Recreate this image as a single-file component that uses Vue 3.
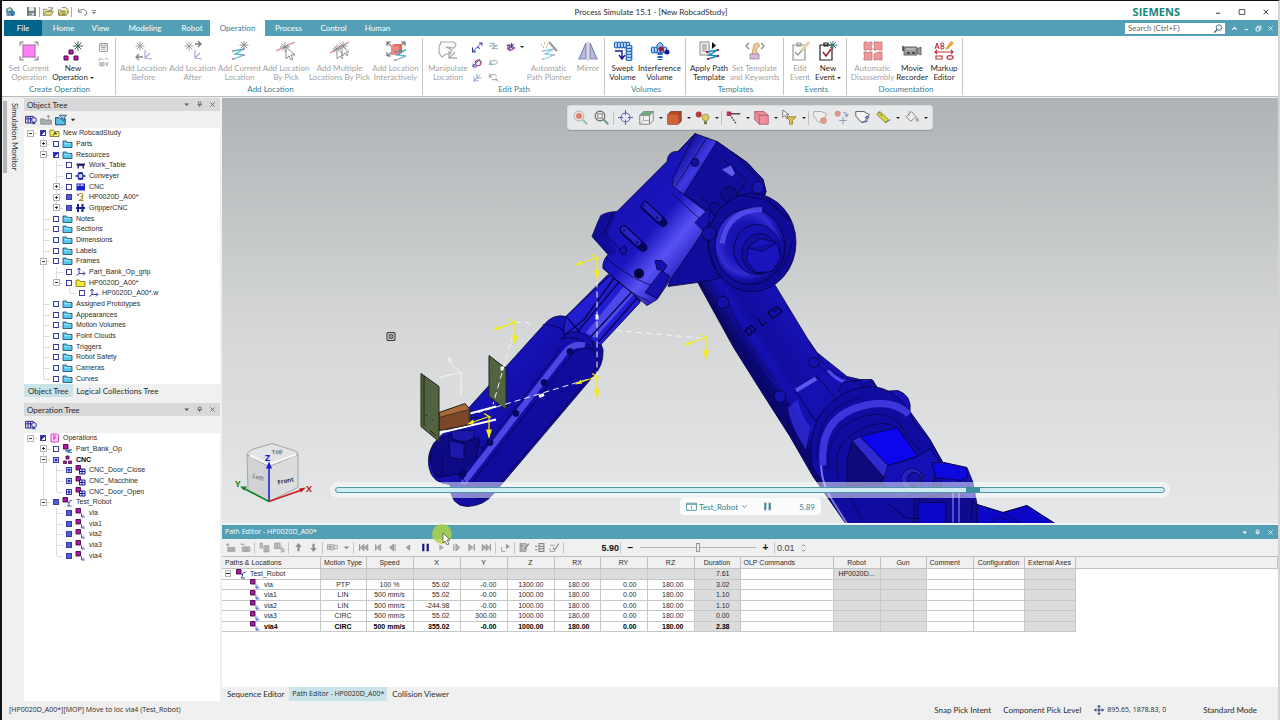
<script setup>
import { computed, ref } from 'vue'

const star = (x, y, r, c) => {
  const d = Math.round(r * 7) / 10
  return `<path d="M${x - r} ${y}h${2 * r}M${x} ${y - r}v${2 * r}M${x - d} ${y - d}l${2 * d} ${2 * d}M${x - d} ${y + d}l${2 * d} ${-2 * d}" stroke="${c}" stroke-width=".9" fill="none"/>`
}
const zig = (x, y, o = 1) =>
  `<g opacity="${o}"><path d="M${x} ${y + 2}l11-2-9 5 9 1-10 4" stroke="#2c9ac0" stroke-width="1.3" fill="none"/><path d="M${x - 1} ${y + 1}h2v2h-2zM${x + 10} ${y - 1}h2v2h-2zM${x + 10} ${y + 5}h2v2h-2zM${x - 1} ${y + 9}h2v2h-2z" fill="#d4607c"/></g>`
const coil = (x, y, n, v) => {
  let s = ''
  for (let i = 0; i < n; i++) {
    s += `<ellipse cx="${v ? x : x + i * 3}" cy="${v ? y + i * 3 : y}" rx="${v ? 3 : 1.7}" ry="${v ? 1.7 : 3}" fill="#b9dcf5" stroke="#1b60bd" stroke-width="1.1"/>`
  }
  return s
}

const icons = {
  app: '<path d="M2 5l7-3 5 3v7l-6 5-6-4z" fill="#4c8db1"/><path d="M4 6l5-2 3 3-5 3z" fill="#d6e38d"/><circle cx="13" cy="13" r="5" fill="#2d6aa5"/><path d="M3 14h7v4H3zM12 10l5 5" fill="#596f7c" stroke="#b8dcf0"/>',
  save: '<path d="M2 2h14l2 2v14H2z" fill="#687374"/><path d="M5 2h10v7H5z" fill="#e5ebea"/><path d="M6 12h9v6H6z" fill="#c2cccc"/><path d="M8 13h2v4H8z" fill="#4e5758"/>',
  open: '<path d="M1 17V6h6l2 2h7v3" fill="#e9e7ac" stroke="#858449" stroke-width="1.4"/><path d="M1 17l4-7h14l-4 7z" fill="#d9d67a" stroke="#858449" stroke-width="1.4"/><path d="M9 4c3-3 6-2 8 1M17 2v4h-4" fill="none" stroke="#667" stroke-width="1.3"/>',
  open2: '<path d="M1 16V7h5l2 2h7v2" fill="#eceaae" stroke="#7b7a3c" stroke-width="1.5"/><path d="M1 17l4-7h14l-4 7z" fill="#d9d568" stroke="#7b7a3c" stroke-width="1.5"/><path d="M7 3l6-1 5 4v7" fill="#f0eeb5" stroke="#7b7a3c" stroke-width="1.5"/><path d="M7 13h6v3H7z" fill="#86862f"/>',
  undo: '<path d="M3 5v6h6M3 11c4-7 13-6 15 2-1 3-3 4-5 4" fill="none" stroke="#707577" stroke-width="1.7"/>',
  qat: '<path d="M5 5h10v2H5zM5 10h10l-5 5z" fill="#666"/>',
  setcur: '<path d="M1 5V1h4M15 1h4v4M19 15v4h-4M5 19H1v-4M1 1l4 4M19 1l-4 4M1 19l4-4M19 19l-4-4" stroke="#777" fill="none" stroke-width=".9"/><rect x="4" y="4" width="12" height="12" fill="#ff80f4" stroke="#a867a8"/>',
  newop: `<g fill="#c318c0" stroke="#4a0a4c"><path d="M6 9h4v4H6zM1 15h4v4H1zM11 15h4v4h-4z"/></g>${star(15, 5, 5, '#274e4e')}`,
  before: `${star(6, 5, 4.5, '#999')}<path d="M2 16h7M5 13l-3 3 3 3" fill="none" stroke="#888" stroke-width="1.3"/><path d="M11 9v8l7 1M11 17l5-5" fill="none" stroke="#aaa4e6" stroke-width="1.2"/>`,
  after: `${star(6, 5, 4.5, '#999')}<path d="M12 3h6M15 0l3 3-3 3" fill="none" stroke="#777" stroke-width="1.3"/><path d="M12 9v8l7 1M12 17l5-5" fill="none" stroke="#aaa4e6" stroke-width="1.2"/>`,
  current: `${zig(3, 8, 0.75)}${star(14, 4, 4.5, '#888')}`,
  pick: `<path d="M0 10L19 1" stroke="#d78a9a" stroke-width="1.3"/>${star(9, 6, 5, '#888')}<path d="M10 6v12l3-3 2 4 2-1-2-4h4z" fill="#fff" stroke="#888"/>`,
  multi: `<path d="M0 12L19 1" stroke="#d78a9a" stroke-width="1.3"/>${star(7, 8, 4.5, '#888')}${star(13, 5, 4.5, '#888')}<path d="M7 8v10l3-3 2 3 1-1-2-3h3zM12 5v10l3-3 2 3 1-1-2-3h3z" fill="#fff" stroke="#999"/>`,
  inter: '<path d="M1 5V1h4M1 1l5 5M15 1h4v4M19 1l-5 4M1 15v-4M1 15h4M1 15l5-4" stroke="#777" fill="none" stroke-width="1.2"/><path d="M5 5l3-2h8v8l-3 3H5z" fill="#e06a60"/><path d="M5 5h8v9H5z" fill="#ee8a80"/>' + zig(9, 9, 0.7),
  manip: '<path d="M1 6l2-5h13l2 3-2 3-8-1 6 3-2 4H8L4 16 1 12z" fill="#fafafa" stroke="#aaa" stroke-width="1.2"/><path d="M11 10v7h8M11 17l6-6" fill="none" stroke="#aaa" stroke-width="1.3"/>',
  auto: `${zig(4, 8, 0.5)}<path d="M10 1l8 9" stroke="#999" stroke-width="2"/><path d="M2 4h1M5 2h1M4 6h1M8 3h1M7 6h1" stroke="#c5a55f" stroke-width="1.4"/>`,
  mirror: '<path d="M8 2v16H1zM12 2v16h7z" fill="#b5b8e1" stroke="#8589ba" stroke-width="1.2"/><path d="M10 0v20" stroke="#999" stroke-width=".7"/>',
  swept: `${coil(3, 4, 5, false)}${coil(16, 6, 5, true)}<path d="M2 10h7v7M6 14l3 4 3-4" fill="none" stroke="#1a1694" stroke-width="1.4"/>`,
  interf: `${coil(3, 9, 5, false)}<path d="M10 1l3 3v4H7V4z" fill="#89c5f0" stroke="#2064be"/><path d="M10 12v7" stroke="#2064be" stroke-width="5" stroke-dasharray="2 1"/><circle cx="11" cy="8" r="2.500" fill="#a61640"/><circle cx="17" cy="11" r="2.500" fill="#1a1694"/>`,
  apply: '<path d="M1 1h9v13H1z" fill="#f2f2f2" stroke="#888"/><path d="M3 4h5M3 6h5M3 8h5M3 10h4" stroke="#888"/><path d="M13 1l4 3.500-4 3.500z" fill="#111"/><path d="M8 11l11-2-9 5 9 1-10 3" stroke="#1a8ac0" stroke-width="1.4" fill="none"/><path d="M7 10h2v2H7zM18 8h2v2h-2zM18 14h2v2h-2zM8 17h2v2H8z" fill="#b81638"/>',
  settpl: '<path d="M4 2L1 5l3 3M16 2l3 3-3 3" fill="none" stroke="#888" stroke-width="1.3"/><path d="M7 13l1-5 1-5 4-1 2 3-2 1-2 3 2 4z" fill="#ebcb9d" stroke="#cda768"/><path d="M5 13h9v5H5z" fill="#d9b5df" stroke="#b08db8"/>',
  editev: '<path d="M3 4h12v15H3zM7 2h4v3H7z" fill="#fafafa" stroke="#999" stroke-width="1.2"/><path d="M5 11l3 3 5-6" fill="none" stroke="#999" stroke-width="1.3"/><path d="M11 8l7-8 2 2-7 8z" fill="#e8cda7"/>',
  newev: `<path d="M2 4h12v15H2zM6 2h4v3H6z" fill="#fff" stroke="#222" stroke-width="1.2"/><path d="M5 11l3 4 5-7" fill="none" stroke="#9c1730" stroke-width="1.4"/>${star(15, 4, 4.5, '#26736b')}`,
  disas: '<g fill="#f29596" stroke="#b67a7a" stroke-width=".8"><path d="M1 1h3q1 2 3 0h2v3q-2 1 0 3v2H6q-1-2-2 0H1zM11 1h8v8h-3q-1-2-2 0h-3V7q2-1 0-2zM1 11h3q1 2 2 0h3v8H1v-3q2-1 0-2zM11 13l4-2h4v8h-3q-1-2-2 0h-3z"/></g>',
  movie: '<path d="M2 6h13v8H2zM15 8l4-2v8l-4-2z" fill="#9a9d9c" stroke="#666"/><path d="M1 5v5M5 12h3M10 12h3" stroke="#333" stroke-width="1.4"/><path d="M4 8h9" stroke="#ccc"/>',
  markup: '<path d="M1 8l2-6 2 6M2 6h2M7 8V2h2q2 1 0 3H7h2q2 2 0 3z" fill="none" stroke="#c2303a"/><path d="M12 7l5-7 3 2-6 6-3 1z" fill="#e8a43c"/><path d="M1 11h18M3 9l-2 2 2 2M17 9l2 2-2 2M2 15h6v3H2z" fill="none" stroke="#c2303a" stroke-width="1.2"/><ellipse cx="16" cy="16.500" rx="3" ry="1.800" fill="none" stroke="#c2303a" stroke-width="1.200"/>',
  list: '<path d="M3 3h14v14H3zM3 7h14M6 10h8M6 13h8M7 1v4M13 1v4" fill="none" stroke="#888" stroke-width="1.5"/>',
  replay: '<path d="M3 8q3-6 7 0M12 6q4-5 6 1M3 8l-1-4M3 12h3v6H3zM8 12h3v6H8zM14 11l2 7 2-7" fill="none" stroke="#999" stroke-width="1.5"/>',
  p1: '<path d="M3 16L15 4" stroke="#3c3cac" stroke-width="1.500"/><path d="M1 10v8h6M13 2h5v5M10 9l4 3" fill="none" stroke="#3434a0" stroke-width="2"/><circle cx="4" cy="16" r="2" fill="#4d9bc4"/>',
  p2: '<path d="M2 8l15-2-10 6h11M3 3h8M9 1l3 2-3 2" fill="none" stroke="#7a9cae" stroke-width="1.500"/>',
  p3: '<circle cx="10" cy="10" r="5" fill="none" stroke="#c23b67" stroke-width="2"/><path d="M3 6h6v10M12 2v9h7M4 13l12-9" fill="none" stroke="#3a35a8" stroke-width="1.800"/>',
  p4: '<path d="M2 17l12-13M2 12v6h7" fill="none" stroke="#3b37b0" stroke-width="1.800"/><circle cx="11" cy="11" r="5" fill="none" stroke="#b8358a" stroke-width="2"/><path d="M12 4l6 6" stroke="#48a068" stroke-width="2"/>',
  p5: '<path d="M2 14c3-9 15-10 15-4 0 4-6 4-11 2M4 5v9h5" fill="none" stroke="#879ba8" stroke-width="1.600"/>',
  p6: '<path d="M2 18l13-13M4 8v8h8M9 3v8h8" fill="none" stroke="#8491c8" stroke-width="1.500"/>',
  p7: '<path d="M2 9c4-6 11-6 14-1M4 3l-2 6h6M7 14h10M14 11l4 6" fill="none" stroke="#8b979c" stroke-width="1.600"/>',
  cols: '<path d="M1 4h13v11H1zM1 8h13M5 4v11M9 4v11" fill="none" stroke="#22228c" stroke-width="1.600"/><circle cx="15" cy="10" r="4" fill="#dce4ff" stroke="#22228c" stroke-width="1.500"/><path d="M13 14v4l2-2 2 2v-4" fill="#22228c"/>',
  importg: '<path d="M1 17V8h6l2 2h10v7zM14 9V3M11 5l3-3 3 3" fill="#a9abac" stroke="#8e9192" stroke-width="1.400"/>',
  filter: '<path d="M1 18V6h6l2 2h8v10z" fill="#58c3e8" stroke="#173a66" stroke-width="1.500"/><path d="M7 2h12l-4 5v5l-3-2V7z" fill="#91cff0" stroke="#173a66" stroke-width="1.200"/>',
  folder: '<path d="M1 17V4h7l2 3h9v10z" fill="#58c8ec" stroke="#185070" stroke-width="1.700"/><path d="M3 9h14" stroke="#a9e6f8" stroke-width="1.500"/>',
  folderY: '<path d="M1 17V4h7l2 3h9v10z" fill="#f0e83a" stroke="#77722a" stroke-width="1.700"/>',
  study: '<path d="M1 17V4h7l2 3h9v10z" fill="#f3ee66" stroke="#77722a" stroke-width="1.700"/><path d="M7 15l4-6 1 3 3-1M11 9v3" fill="none" stroke="#333" stroke-width="2"/>',
  tableI: '<path d="M2 7h17v4h-2v6h-3v-5H7v5H4v-6H2z" fill="#262478"/>',
  conv: '<path d="M0 10h20" stroke="#17177c" stroke-width="3"/><path d="M6 2h8l3 8-3 8H6l-3-8z" fill="#2c32a8"/><circle cx="10" cy="10" r="4" fill="#c8d8fa"/>',
  cnc: '<path d="M2 3h17v14H2z" fill="#1b22c8"/><path d="M4 6h4M10 6h6" stroke="#fff" stroke-width="2.500"/>',
  robot: '<path d="M7 4q7-3 8 2 0 3-5 3 5 1 4 4l-6 4h8" fill="none" stroke="#a58e23" stroke-width="2.200"/><path d="M3 3l3 4M4 8l2-4" stroke="#443" stroke-width="1.500"/>',
  grip: '<path d="M5 2v16M14 2v16M1 10h18" stroke="#191e9c" stroke-width="4"/>',
  frame: '<path d="M7 3v10h11M7 13l-5 4M15 9l4 4-4 4M4 6l3-4 3 4" fill="none" stroke="#2a2a9c" stroke-width="1.800"/>',
  ops: '<path d="M3 2h13l2 2v14H3z" fill="#ffd6fa" stroke="#c436b4" stroke-width="1.800"/><path d="M7 6h6M7 10h7M9 6v9" stroke="#c436b4" stroke-width="1.800"/>',
  partop: '<path d="M2 1h9v9H2z" fill="#b214aa" stroke="#43083f" stroke-width="1.800"/><path d="M5 14l13-3-8 5 9 1" fill="none" stroke="#236ec0" stroke-width="2.200"/>',
  cmp: '<g fill="#b214aa" stroke="#43083f" stroke-width="1.600"><path d="M7 2h6v6H7zM2 12h6v5H2zM12 12h6v5h-6z"/></g>',
  door: '<path d="M1 1h9v9H1z" fill="#b214aa" stroke="#43083f" stroke-width="1.800"/><path d="M8 8h11v10H8zM8 13h11M13 8v10" fill="#e8eeff" stroke="#16169c" stroke-width="2"/>',
  robop: '<path d="M1 1h9v9H1z" fill="#b214aa" stroke="#43083f" stroke-width="1.800"/><path d="M19 6l-6 3v6l-3 3h8M10 10l3 2" fill="none" stroke="#2c4cb8" stroke-width="2"/>',
  via: '<path d="M1 1h9v9H1z" fill="#b214aa" stroke="#43083f" stroke-width="1.800"/><path d="M12 10v8h7M12 18l5-5" fill="none" stroke="#2c3cc0" stroke-width="1.600"/>',
  zoomsel: '<circle cx="8" cy="8" r="6.500" fill="#f7e2de" stroke="#a9b2b5" stroke-width="1.300"/><circle cx="8" cy="8" r="4" fill="#d98272"/><path d="M13 13l6 6" stroke="#91c4ab" stroke-width="2.500"/>',
  zoomfit: '<circle cx="8" cy="8" r="6.500" fill="#eee" stroke="#666" stroke-width="1.500"/><path d="M5 5h6v6H5z" fill="none" stroke="#555"/><path d="M13 13l6 6" stroke="#6e9b88" stroke-width="2.500"/>',
  target: '<circle cx="10" cy="10" r="6" fill="#e9ebfa" stroke="#5b66a8" stroke-width="1.400"/><path d="M10 0v7M10 13v7M0 10h7M13 10h7" stroke="#5b66a8" stroke-width="1.400"/>',
  cubeG: '<path d="M1 7l5-5h13v12l-5 5H1z" fill="#eee" stroke="#666"/><path d="M1 7l5-5h13l-5 5z" fill="#6cb280"/><path d="M1 7h13v12M14 7l5-5" fill="none" stroke="#666"/><path d="M6 8v6h8M6 14l-5 5" stroke="#999" fill="none"/>',
  cubeR: '<path d="M1 6l4-4h14v13l-4 4H1z" fill="#b44a28" stroke="#6c3625"/><path d="M1 6h14v13H1z" fill="#cf6238"/><path d="M15 6l4-4" stroke="#6c3625"/>',
  bulb: '<circle cx="5" cy="6" r="4" fill="#b43c38"/><circle cx="14" cy="10" r="4.500" fill="#d8cf67" stroke="#928b3a"/><path d="M12 15h4v4h-4z" fill="#76754f"/>',
  chain: '<path d="M4 5h15" stroke="#4d5054" stroke-width="2"/><path d="M5 6l9 13" stroke="#444" stroke-width="1.800" stroke-dasharray="2.500 1.500"/><path d="M1 2h6v6H1z" fill="#ba2f4d"/>',
  cubeP: '<path d="M1 2h12l6 5v12H7l-6-6z" fill="#ee8e9c" stroke="#a85461"/><path d="M1 2l6 5h12M7 7v12" fill="none" stroke="#a85461"/>',
  filt2: '<path d="M5 9h14l-5 5v5h-4v-5z" fill="#d9bc48" stroke="#8d7a30"/><path d="M1 0v10l3-3 2 4 2-1-2-4h3z" fill="#fff" stroke="#555"/>',
  g1: '<path d="M1 2h10l7 3-2 5-5 6H7L1 8z" fill="#eee" stroke="#999"/><circle cx="14" cy="14" r="4.500" fill="#dd9a8d"/>',
  g2: '<circle cx="5" cy="5" r="4" fill="#dc9488"/><path d="M12 3q5 0 5 5M14 6l3 3 2-4M12 9v10M7 14h10" fill="none" stroke="#8e9ebb" stroke-width="1.400"/>',
  g3: '<path d="M1 2h11l7 4-2 4-5 6H8L1 8z" fill="#f4f4f4" stroke="#555" stroke-width="1.200"/><path d="M16 9v6l-7 2M13 11l3-3 3 3" fill="none" stroke="#5665a8" stroke-width="1.400"/>',
  ruler: '<path d="M1 6l4-4 12 11-4 4z" fill="#d6d643" stroke="#75752f"/><path d="M4 2v3M7 5v3M12 17l7-4" stroke="#555"/>',
  paint: '<path d="M3 9l7-7 6 7-7 6z" fill="#eee" stroke="#888" stroke-width="1.300"/><path d="M17 10q4 5 1 5t-1-5M7 0v8" fill="#aaa" stroke="#999"/>',
  addp: '<path d="M2 5h6M5 2v6" stroke="#999" stroke-width="2"/><path d="M5 10h13v7H5zM9 10v7M13 10v7" fill="#bbb" stroke="#999" stroke-width="1.500"/>',
  remp: '<path d="M1 4h7" stroke="#999" stroke-width="2"/><path d="M4 9h14v8H4zM9 9v8M13 9v8" fill="#bbb" stroke="#999" stroke-width="1.500"/>',
  cp1: '<path d="M2 2h4v9H2zM9 7h9v11H9zM12 7v11M15 7v11" fill="#ccc" stroke="#999" stroke-width="1.500"/>',
  cp2: '<path d="M1 2h10v10H1zM4 2v10M7 2v10M14 8v5h-3M14 13h4v5h-6" fill="#ccc" stroke="#999" stroke-width="1.500"/>',
  up: '<path d="M10 2l6 7h-4v8H8V9H4z" fill="#8d9091"/>',
  down: '<path d="M10 18l6-7h-4V3H8v8H4z" fill="#8d9091"/>',
  rows: '<path d="M1 5h12v9H1zM1 8h12M1 11h12M6 5v9M14 6h5v6h-5" fill="none" stroke="#999" stroke-width="1.500"/>',
  drop: '<path d="M5 8h10l-5 5z" fill="#888"/>',
  dropB: '<path d="M3 6h14l-7 8z" fill="#222"/>',
  first: '<path d="M3 4v12" stroke="#888" stroke-width="2"/><path d="M11 4v12l-7-6zM18 4v12l-7-6z" fill="#aaa" stroke="#888"/>',
  prevk: '<path d="M5 4v12" stroke="#888" stroke-width="2"/><path d="M14 4v12l-8-6z" fill="#aaa" stroke="#888"/>',
  stepb: '<path d="M10 4v12l-7-6zM13 4v12" fill="#aaa" stroke="#888" stroke-width="1.500"/>',
  playb: '<path d="M13 4v12l-8-6z" fill="#999"/>',
  pause: '<path d="M4 3h4v14H4zM12 3h4v14h-4z" fill="#15157e"/>',
  play: '<path d="M6 4v12l8-6z" fill="#aaa"/>',
  stepf: '<path d="M9 4v12l7-6zM5 4v12" fill="#bbb" stroke="#888" stroke-width="1.500"/>',
  nextk: '<path d="M15 4v12" stroke="#888" stroke-width="2"/><path d="M5 4v12l8-6z" fill="#aaa" stroke="#888"/>',
  last: '<path d="M17 4v12" stroke="#888" stroke-width="2"/><path d="M9 4v12l7-6zM2 4v12l7-6z" fill="#aaa" stroke="#888"/>',
  goto: '<path d="M3 9v8h7" fill="none" stroke="#999" stroke-width="1.500"/><path d="M11 3v10l7-5z" fill="#999"/>',
  edt: '<path d="M2 3h11v14H2zM5 3v14M2 7h8" fill="#ccc" stroke="#888" stroke-width="1.500"/><path d="M9 14l9-11" stroke="#888" stroke-width="2.500"/>',
  tbl: '<path d="M2 8h4M9 3h9v14H9zM9 8h9M9 12h9M2 14l4 0" fill="none" stroke="#888" stroke-width="2"/>',
  chk: '<path d="M2 6h9M2 11v6h9" fill="none" stroke="#999" stroke-width="1.600"/><path d="M7 10l3 4 8-11" fill="none" stroke="#888" stroke-width="2"/>',
  pin: '<path d="M7 3h7v8H7zM4 11h13M10 11v6" fill="none" stroke="currentColor" stroke-width="2"/>',
  close: '<path d="M4 4l12 12M16 4L4 16" fill="none" stroke="currentColor" stroke-width="2.200"/>',
  caret: '<path d="M4 7h13l-6 7z" fill="currentColor"/>',
  min: '<path d="M5 13h10" stroke="currentColor" stroke-width="2.500"/>',
  max: '<path d="M3 4h14v12H3z" fill="none" stroke="currentColor" stroke-width="2"/>',
  restore: '<path d="M3 8h10v9H3zM7 8V3h10v9h-4" fill="none" stroke="currentColor" stroke-width="2.400"/>',
  chev: '<path d="M4 13l6-6 6 6" fill="none" stroke="currentColor" stroke-width="3"/>',
  chevd: '<path d="M4 7l6 6 6-6" fill="none" stroke="currentColor" stroke-width="2.500"/>',
  search: '<circle cx="11" cy="8" r="6" fill="none" stroke="#2c6275" stroke-width="2"/><path d="M7 12l-6 7" stroke="#2c6275" stroke-width="3"/>',
  card: '<path d="M1 4h18v13H1zM1 6h18" fill="none" stroke="#4a8e9f" stroke-width="1.600"/><path d="M10 9v5" stroke="#4a8e9f" stroke-width="1.600"/>',
  bars: '<path d="M4 3h4v14H4zM12 3h4v14h-4z" fill="#438799"/>',
  move: '<path d="M10 1v18M1 10h18M7 4l3-3 3 3M7 16l3 3 3-3M4 7l-3 3 3 3M16 7l3 3-3 3" fill="none" stroke="#1d2a66" stroke-width="1.800"/>',
}

const tabs = ['File', 'Home', 'View', 'Modeling', 'Robot', 'Operation', 'Process', 'Control', 'Human']

const groups = [
  { id: 'create', label: 'Create Operation', items: [
    { i: 'setcur', t: ['Set Current', 'Operation'] },
    { i: 'newop', t: ['New', 'Operation'], on: true, menu: true },
    { small: ['list', 'replay'] } ] },
  { id: 'location', label: 'Add Location', items: [
    { i: 'before', t: ['Add Location', 'Before'] },
    { i: 'after', t: ['Add Location', 'After'] },
    { i: 'current', t: ['Add Current', 'Location'] },
    { i: 'pick', t: ['Add Location', 'By Pick'] },
    { i: 'multi', t: ['Add Multiple', 'Locations By Pick'] },
    { i: 'inter', t: ['Add Location', 'Interactively'] } ] },
  { id: 'path', label: 'Edit Path', items: [
    { i: 'manip', t: ['Manipulate', 'Location'] },
    { small: ['p1', 'p2', 'p3', 'p4', 'p5', '', 'p6', 'p7'], wide: true },
    { i: 'auto', t: ['Automatic', 'Path Planner'] },
    { i: 'mirror', t: ['Mirror', '\u00a0'] } ] },
  { id: 'volumes', label: 'Volumes', items: [
    { i: 'swept', t: ['Swept', 'Volume'], on: true },
    { i: 'interf', t: ['Interference', 'Volume'], on: true } ] },
  { id: 'templates', label: 'Templates', items: [
    { i: 'apply', t: ['Apply Path', 'Template'], on: true },
    { i: 'settpl', t: ['Set Template', 'and Keywords'] } ] },
  { id: 'events', label: 'Events', items: [
    { i: 'editev', t: ['Edit', 'Event'] },
    { i: 'newev', t: ['New', 'Event'], on: true, menu: true } ] },
  { id: 'docs', label: 'Documentation', items: [
    { i: 'disas', t: ['Automatic', 'Disassembly'] },
    { i: 'movie', t: ['Movie', 'Recorder'], on: true },
    { i: 'markup', t: ['Markup', 'Editor'], on: true } ] },
]

// [level, expander, check state, icon, label, bold]
const objects = [
  [0, '-', 'part', 'study', 'New RobcadStudy'],
  [1, '+', '', 'folder', 'Parts'],
  [1, '-', 'part', 'folder', 'Resources'],
  [2, '', '', 'tableI', 'Work_Table'],
  [2, '', '', 'conv', 'Conveyer'],
  [2, '+', '', 'cnc', 'CNC'],
  [2, '+', 'full', 'robot', 'HP0020D_A00*'],
  [2, '+', 'full', 'grip', 'GripperCNC'],
  [1, '', '', 'folder', 'Notes'],
  [1, '', '', 'folder', 'Sections'],
  [1, '', '', 'folder', 'Dimensions'],
  [1, '', '', 'folder', 'Labels'],
  [1, '-', '', 'folder', 'Frames'],
  [2, '', '', 'frame', 'Part_Bank_Op_grip'],
  [2, '-', '', 'folderY', 'HP0020D_A00*'],
  [3, '', '', 'frame', 'HP0020D_A00*.w'],
  [1, '', '', 'folder', 'Assigned Prototypes'],
  [1, '', '', 'folder', 'Appearances'],
  [1, '', '', 'folder', 'Motion Volumes'],
  [1, '', '', 'folder', 'Point Clouds'],
  [1, '', '', 'folder', 'Triggers'],
  [1, '', '', 'folder', 'Robot Safety'],
  [1, '', '', 'folder', 'Cameras'],
  [1, '', '', 'folder', 'Curves'],
]
const operations = [
  [0, '-', 'part', 'ops', 'Operations'],
  [1, '+', '', 'partop', 'Part_Bank_Op'],
  [1, '-', 'cross', 'cmp', 'CNC', true],
  [2, '', 'cross', 'door', 'CNC_Door_Close'],
  [2, '', 'cross', 'door', 'CNC_Macchine'],
  [2, '', 'cross', 'door', 'CNC_Door_Open'],
  [1, '-', 'full', 'robop', 'Test_Robot'],
  [2, '', 'full', 'via', 'via'],
  [2, '', 'full', 'via', 'via1'],
  [2, '', 'full', 'via', 'via2'],
  [2, '', 'full', 'via', 'via3'],
  [2, '', 'full', 'via', 'via4'],
]
const withGuides = (rows) =>
  rows.map((r, n) => {
    const cells = []
    for (let k = 0; k <= r[0]; k++) {
      let more = false
      for (let m = n + 1; m < rows.length && rows[m][0] >= k; m++) {
        if (rows[m][0] === k) { more = true; break }
      }
      if (k < r[0]) cells.push(more ? 'line' : 'blank')
      else if (k === 0) cells.push('root')
      else cells.push(more ? 'tee' : 'corner')
    }
    return { cells, exp: r[1], check: r[2], icon: r[3], label: r[4], bold: r[5] }
  })
const trees = computed(() => [
  { title: 'Object Tree', cls: 'objects', tools: ['cols', 'importg', 'filter', 'dropB'], rows: withGuides(objects) },
  { title: 'Operation Tree', cls: 'operations', tools: ['cols'], rows: withGuides(operations) },
])

const viewTools = ['zoomsel', 'zoomfit', '|', 'target', 'cubeG', 'v', 'cubeR', 'v', 'bulb', 'v', '|', 'chain', 'v', 'cubeP', 'v', 'filt2', 'v', '|', 'g1', 'g2', 'g3', 'ruler', 'v', 'paint', 'v']
const pathTools = ['addp', 'remp', '|', 'cp1', 'cp2', '|', 'up', 'down', '|', 'rows', 'drop', '|', 'first', 'prevk', 'stepb', 'playb', 'pause', 'play', 'stepf', 'nextk', 'last', '|', 'goto', '|', 'edt', 'tbl', 'chk', '|']

const columns = ['Paths & Locations', 'Motion Type', 'Speed', 'X', 'Y', 'Z', 'RX', 'RY', 'RZ', 'Duration', 'OLP Commands', 'Robot', 'Gun', 'Comment', 'Configuration', 'External Axes']
const rows = [
  ['Test_Robot', '', '', '', '', '', '', '', '', '7.61', '', 'HP0020D...', '', '', '', ''],
  ['via', 'PTP', '100 %', '55.02', '-0.00', '1300.00', '180.00', '0.00', '180.00', '3.02', '', '', '', '', '', ''],
  ['via1', 'LIN', '500 mm/s', '55.02', '-0.00', '1000.00', '180.00', '0.00', '180.00', '1.10', '', '', '', '', '', ''],
  ['via2', 'LIN', '500 mm/s', '-244.98', '-0.00', '1000.00', '180.00', '0.00', '180.00', '1.10', '', '', '', '', '', ''],
  ['via3', 'CIRC', '500 mm/s', '55.02', '300.00', '1000.00', '180.00', '0.00', '180.00', '0.00', '', '', '', '', '', ''],
  ['via4', 'CIRC', '500 mm/s', '355.02', '-0.00', '1000.00', '180.00', '0.00', '180.00', '2.38', '', '', '', '', '', ''],
]
const isGrey = (r, c) => [9, 11, 12, 15].includes(c) || (r === 0 && c > 0 && c < 9)
const cellKind = (c) => (c === 0 ? 'name' : c > 2 && c < 10 ? 'num' : 'mid')

const frames = [[597, 258], [515, 323], [706, 338], [597, 377], [489, 417]]
const time = ref(5.89)
const speed = ref(50)
</script>

<template>
  <div class="app">
    <header class="titlebar">
      <div class="quick">
        <svg class="ic10" viewBox="0 0 20 20" v-html="icons.app"></svg>
        <button class="qb first" aria-label="Save"><svg viewBox="0 0 20 20" v-html="icons.save"></svg></button>
        <i class="qsep"></i>
        <button class="qb" aria-label="Open"><svg viewBox="0 0 20 20" v-html="icons.open"></svg></button>
        <button class="qb" aria-label="Open study"><svg viewBox="0 0 20 20" v-html="icons.open2"></svg></button>
        <i class="qsep"></i>
        <button class="qb undo" aria-label="Undo"><svg viewBox="0 0 20 20" v-html="icons.undo"></svg></button>
        <button class="qb narrow" aria-label="Customize"><svg viewBox="0 0 20 20" v-html="icons.qat"></svg></button>
      </div>
      <h1>Process Simulate 15.1 - [New RobcadStudy]</h1>
      <div class="winctl">
        <strong class="brand">SIEMENS</strong>
        <button v-for="b in ['min', 'max', 'close']" :key="b" :aria-label="b"><svg viewBox="0 0 20 20" v-html="icons[b]"></svg></button>
      </div>
    </header>

    <nav class="tabs">
      <button v-for="t in tabs" :key="t" :class="{ file: t === 'File', active: t === 'Operation' }">{{ t }}</button>
      <div class="tabsright">
        <div class="search">
          <input type="text" aria-label="Search" placeholder="Search (Ctrl+F)" />
          <svg viewBox="0 0 20 20" v-html="icons.search"></svg>
        </div>
        <button v-for="b in ['chev', 'min', 'restore', 'close']" :key="b" :aria-label="b"><svg viewBox="0 0 20 20" v-html="icons[b]"></svg></button>
      </div>
    </nav>

    <section class="ribbon">
      <div v-for="g in groups" :key="g.id" class="group" :class="g.id">
        <div class="items">
          <template v-for="(it, n) in g.items" :key="n">
            <div v-if="it.small" class="smalls" :class="{ wide: it.wide }">
              <template v-for="(s, k) in it.small" :key="k">
                <button v-if="s" :aria-label="'Tool ' + (k + 1)">
                  <svg viewBox="0 0 20 20" v-html="icons[s]"></svg><i v-if="s === 'p3'" class="tri"></i>
                </button>
                <span v-else></span>
              </template>
            </div>
            <button v-else class="big" :class="{ on: it.on }">
              <svg viewBox="0 0 20 20" v-html="icons[it.i]"></svg>
              <span>{{ it.t[0] }}</span>
              <span>{{ it.t[1] }}<i v-if="it.menu" class="tri"></i></span>
            </button>
          </template>
        </div>
        <div class="glabel">{{ g.label }}</div>
      </div>
    </section>

    <main class="work">
      <aside class="monitor"><i></i><button>Simulation Monitor</button></aside>

      <div class="side">
        <section v-for="t in trees" :key="t.title" class="panel" :class="t.cls">
          <header class="phead">
            <h2>{{ t.title }}</h2>
            <button v-for="b in ['caret', 'pin', 'close']" :key="b" :aria-label="b"><svg viewBox="0 0 20 20" v-html="icons[b]"></svg></button>
          </header>
          <div class="ptools">
            <button v-for="b in t.tools" :key="b" :class="b" :aria-label="b"><svg viewBox="0 0 20 20" v-html="icons[b]"></svg></button>
          </div>
          <div class="ptree">
            <ul>
              <li v-for="(r, n) in t.rows" :key="n">
                <span v-for="(c, k) in r.cells" :key="k" class="guide" :class="c">
                  <button v-if="r.exp && k === r.cells.length - 1" class="exp" :class="{ plus: r.exp === '+' }" :aria-label="r.exp === '+' ? 'Expand' : 'Collapse'"></button>
                </span>
                <label :class="{ bold: r.bold }">
                  <input type="checkbox" :class="r.check" :checked="r.check === 'full'" />
                  <svg viewBox="0 0 20 20" v-html="icons[r.icon]"></svg>{{ r.label }}
                </label>
              </li>
            </ul>
          </div>
          <div v-if="t.cls === 'objects'" class="ptabs">
            <button class="active">Object Tree</button><button>Logical Collections Tree</button>
          </div>
        </section>
      </div>

      <div class="center">
        <section class="viewport">
          <svg class="scene" viewBox="222 98 1056 426" preserveAspectRatio="xMidYMid slice">
            <defs>
              <linearGradient id="tube" gradientUnits="userSpaceOnUse" x1="625" y1="195" x2="705" y2="262">
                <stop offset="0" stop-color="#1712b4" /><stop offset=".42" stop-color="#1a15be" /><stop offset=".66" stop-color="#5852f5" /><stop offset="1" stop-color="#140fa6" />
              </linearGradient>
              <linearGradient id="head" gradientUnits="userSpaceOnUse" x1="672" y1="165" x2="720" y2="200">
                <stop offset="0" stop-color="#120e96" /><stop offset=".35" stop-color="#3f39e2" /><stop offset=".6" stop-color="#1713b2" /><stop offset="1" stop-color="#1410ae" />
              </linearGradient>
              <linearGradient id="leg" gradientUnits="userSpaceOnUse" x1="740" y1="350" x2="800" y2="312">
                <stop offset="0" stop-color="#0a0762" /><stop offset=".25" stop-color="#1611b4" /><stop offset=".4" stop-color="#120d9e" /><stop offset="1" stop-color="#1712b8" />
              </linearGradient>
              <linearGradient id="fore" gradientUnits="userSpaceOnUse" x1="490" y1="400" x2="560" y2="455">
                <stop offset="0" stop-color="#1510b2" /><stop offset="1" stop-color="#100b94" />
              </linearGradient>
              <radialGradient id="disc" cx=".45" cy=".45" r=".56">
                <stop offset="0" stop-color="#120e98" /><stop offset=".5" stop-color="#1914b4" /><stop offset=".74" stop-color="#322cd2" /><stop offset=".86" stop-color="#1612ae" /><stop offset="1" stop-color="#0d0987" />
              </radialGradient>
              <g id="via-frame" stroke="#f2ee12" fill="#f2ee12" stroke-width="1.200">
                <path d="M0 0L-20 7M0 0V21M-5-3L2 1" fill="none" />
                <path d="M-22 8l6-5 1 4zM-3 13h6l-3 9z" stroke="none" />
              </g>
            </defs>

            <g stroke="#05033e" stroke-width=".8" stroke-linejoin="round">
              <path fill="url(#leg)" d="M695 278L733 347 760 390 790 437 813 477 847 526H1058L1027 506 1003 513 977 505 973 483 967 468 943 463 928 437 910 412Q912 396 898 391L880 392 872 380H860L847 377 817 353 808 340 768 274Z" />
              <path fill="#0a0670" opacity=".7" stroke="none" d="M733 347l10-6 30 44q26 26 32 54l18 52-10-14-23-40-30-47z" />
              <path fill="#302ad4" stroke="none" opacity=".8" d="M798 400q2 14 12 28l-4 22q-16-24-18-42z" />
              <path fill="#1510b0" d="M795 390l22-13 21 24-23 20z" /><path fill="none" stroke="#5d58f0" stroke-width="4" d="M796 391l20-12" />
              <path fill="none" stroke="#0a0660" d="M723 291q18 48 52 90M700 285l66 106M808 340l14 22q12 16 38 20M818 366q24 24 54 22" />
              <path fill="none" stroke="#514bea" stroke-width="3" d="M828 371q12 14 30 13" />
              <path fill="#120da4" d="M838 391l6-9 16-1 6 10-18 10zM865 384l8-3 4 9-7 4z" />
              <g fill="#1611aa"><circle cx="723" cy="303" r="6" /><circle cx="780" cy="397" r="6" /><circle cx="814" cy="363" r="5" /></g>
              <path fill="none" stroke="#06043a" stroke-width="1.300" d="M745 331l6-5 5 4-7 6zM749 328l3 5M758 319l4 7 5-3M768 313l9-6 5 5-9 7zM773 312l5-2" />
              <path fill="#110ca0" d="M812 467q-8-56 38-76 36-14 60 21 4 14 20 28l14 26-10 58h-86z" />
              <path fill="none" stroke="#3c36dc" stroke-width="7" d="M823 466q-4-48 38-59 30-9 48 8" />
              <path fill="none" stroke="#7974f2" stroke-width="2" d="M821 466q1 20 12 36l14 22" />
              <path fill="none" stroke="#070450" d="M817 460q-2-52 44-62M829 470q-4-38 28-51 38-14 50 18l18 20M838 478q-8-34 22-48 24-12 38-1 8 8 6 16M845 490l20 34" />
              <path fill="#0e0a7c" d="M847 460l6-20 32 33-5 12-33 1z" />
              <path fill="#302bd0" d="M852 441l8-4 30 29-6 12z" />
              <path fill="#0c06ee" d="M860 437l37-9 21 29-30 9z" />
              <path fill="#1510b6" d="M888 466l30-9 12-8 10 14-8 24-32 12-18-15z" />
              <circle cx="912" cy="480" r="11" fill="#2722c0" /><circle cx="914" cy="480" r="7" fill="#1510a4" />
              <path fill="#0d08de" d="M932 463l12 0 22 5 2 10-7 3-26-3z" /><path fill="#0f0b90" d="M914 500l43-8 20 13v19h-63z" />
              <path fill="#0c07c8" d="M918 503h28v21h-28zM977 505l26 8 24-7 31 20h-81z" />
              <path fill="none" stroke="#524cd8" stroke-width="2" d="M953 492v31M959 489v34" /><path fill="none" d="M964 480l10 12-3 28M990 524q10-12 22 0M1003 513l18 11M889 505l18 14h12" />
            </g>

            <g stroke="#05033e" stroke-width=".8" stroke-linejoin="round">
              <path fill="url(#fore)" d="M608 275L566 317Q554 314 545 324L470 407 437 440Q426 452 429 468 432 484 450 485 450 507 468 507 484 506 493 495L593 377Q604 366 603 350L600 342 642 300Z" />
              <path fill="#221dd0" d="M614 272L566 317 563 334 581 335 600 346 640 303Z" /><path fill="#4d48ea" stroke="none" d="M627 283l11 7-43 49-9-6z" />
              <path fill="none" stroke="#08054e" stroke-width="1.300" d="M616 276l-32 44-19 15M622 279l-46 55M634 290l-44 48M641 294l-42 48M566 317l14 16" />
              <path fill="#130ea8" d="M561 340q8-12 22-6 12 5 10 16l-8-7q-12-8-24-3z" />
              <path fill="none" stroke="#4c46e2" stroke-width="6" d="M463 484L565 353q8-10 20-7" />
              <path fill="#110c9e" d="M468 488L572 355q10-11 22-4 8 9-2 24L493 492q-11 12-21 4z" />
              <path fill="none" stroke="#060444" d="M456 486L560 350M468 488q-8-10-4-20M543 325q14 0 22 7" />
              <g fill="#0a066c"><circle cx="570" cy="352" r="3" /><circle cx="544" cy="383" r="3" /><circle cx="516" cy="414" r="3" /><circle cx="490" cy="443" r="3" /><circle cx="462" cy="474" r="4" /></g>
              <path fill="#0e0a86" d="M438 440l18-8 24 8-4 18-16 16-22 4-8-20z" /><path fill="#1d18aa" d="M449 441l15 3v16l-14-2zM452 431h22v8q-11 6-22 0z" />
              <path fill="none" d="M434 443q-8 18 2 34M442 456v16l-5 6M470 440l14 10M462 424q12-10 25-3l6 13-12 16" />
            </g>

            <g stroke="#05033e" stroke-width=".8" stroke-linejoin="round">
              <path fill="#110d9c" d="M700 195l60 5-8 60q-22 20-55 23l-29 4z" />
              <path fill="url(#tube)" d="M695 134L678 152Q668 151 667 162L617 212Q602 212 598 222L592 237 608 255Q602 262 603 269L647 306 657 300 708 225 722 180Z" />
              <path fill="#100c92" stroke="none" opacity=".8" d="M600 216q10-6 16-1l-9 22 10 16-8 3-16-18z" /><path fill="none" d="M614 213l-10 20 22 23M606 258q24 22 52 30M603 268q22 24 46 34M672 194l36 33" />
              <path fill="url(#head)" d="M695 134L717 142 747 163 763 180 766 192 760 212 732 226 715 219 672 186Q672 178 677 170Z" />
              <path fill="#120e9c" d="M717 142L747 163 763 180 766 192 746 217 725 222 684 195Z" />
              <path fill="none" d="M707 138l-31 48M700 196l26 25M722 159l25 22-16 24M733 153l27 28M692 137l-14 16" />
              <path fill="#625ce8" stroke="none" d="M722 170l9-4 4 8-3 3z" /><circle cx="758" cy="188" r="6" fill="#1914b2" /><circle cx="729" cy="195" r="8" fill="#0f0b88" /><circle cx="715" cy="209" r="6" fill="#100c90" /><circle cx="695" cy="163" r="4" fill="#15109e" />
              <g fill="none" stroke-linecap="round"><path d="M645 207l18 16M624 231l19 17" stroke="#090660" stroke-width="9" /><path d="M645 206l14 13M624 230l14 13" stroke="#05033e" stroke-width="8" /><path d="M645 206l14 13M624 230l14 13" stroke="#2822c6" stroke-width="6" /></g>
              <g fill="#05033e" stroke="none"><circle cx="644" cy="206" r="1" /><circle cx="657" cy="218" r="1" /><circle cx="624" cy="231" r="1" /><circle cx="637" cy="243" r="1" /><circle cx="639" cy="274" r="5" /></g>
              <path fill="#1611ac" d="M655 261l7 0 5 5-3 5-7-1zM619 250l6-4 2 6-5 3zM645 293l17-22 8 6-13 22zM695 223l14-14 6 9-12 13z" />
              <ellipse cx="752" cy="243" rx="44" ry="49" fill="#100c98" /><ellipse cx="750" cy="247" rx="35" ry="38" fill="url(#disc)" /><path d="M722 244q6-34 40-34" fill="none" stroke="#5953f0" stroke-width="5" opacity=".8" />
              <ellipse cx="757" cy="250" rx="23" ry="25" fill="#1612b2" />
              <ellipse cx="760" cy="254" rx="18" ry="20" fill="#120e9e" /><path fill="#1914be" d="M748 248l12-9 17 4 4 15-9 14-16 1-9-11zM748 248l14 4 15-9" />
              <path fill="none" d="M710 212q-7 36 9 65M742 196l23 4 26 22M777 275q12-14 15-32M766 198l24 22" /><circle cx="709" cy="234" r="7" fill="#15109e" />
            </g>

            <g stroke="#1c2416" stroke-width="1">
              <path fill="#536240" d="M489 356l17 13v41l-17-13z" />
              <path stroke="#fff" stroke-width="2" d="M437 434l59-14M470 414l26-7" />
              <path fill="#a9683e" d="M439 413l26-9 5 6v15l-31 6z" /><path fill="#7e4828" stroke-width=".7" d="M439 418l30-8v15l-30 6z" />
              <path fill="#536240" d="M421 374l18 13v55l-18-15z" /><path d="M424 376v50M426 416h1M432 421h1M425 426h1M430 431l6 5" />
            </g>
            <g fill="none" stroke="#f5f5f5" stroke-width="1"><path d="M450 358l2 8 9 7-22 5M461 373v23M449 363v-6" /><g stroke-dasharray="6 4"><path d="M597 272v104M597 377L478 413M616 331l90 8M515 323h12q3 2 4 4M513 335l-20 70" /></g><path d="M539 397l5-2M597 315v5M502 367v4" stroke-width="3" /></g>
            <use v-for="(f, n) in frames" :key="n" href="#via-frame" :x="f[0]" :y="f[1]" />
            <g fill="none" stroke="#333"><rect x="387" y="333" width="8" height="8" rx="1" /><circle cx="391" cy="337" r="2" /><path d="M387 333l8 8M395 333l-8 8" stroke-width=".5" /></g>

            <g stroke="#a3a5a7" stroke-linejoin="round">
              <path fill="#d0d2d4" d="M247 455l22 12v35l-21-11z" /><path fill="#dadcdd" d="M269 467l29-12v33l-29 14z" /><path fill="#e3e4e5" d="M247 455q1-3 5-5l20-6 22 7q4 1 4 4l-29 12z" />
              <path fill="none" stroke="#f8f8f8" stroke-width="2" d="M250 456l19 9 27-10M269 467v34" />
            </g>
            <g fill="none" stroke-width="1.600"><path stroke="#1b1bd0" d="M269 502v-36" /><path stroke="#cc1b1f" d="M269 502l34-12" /><path stroke="#138624" d="M269 502l-25-13" /></g>
            <path fill="#1b1bd0" d="M266 469l3-7 3 7z" /><path fill="#cc1b1f" d="M299 489l7-1-5 5z" /><path fill="#138624" d="M240 487l7 0-3 4z" />
            <g class="axes"><text x="265" y="461" fill="#1b1bd0">Z</text><text x="306" y="492" fill="#cc1b1f">X</text><text x="235" y="487" fill="#138624">Y</text></g>
            <g class="face"><text x="278" y="485" transform="rotate(-12 278 485)">Front</text><text x="252" y="478" transform="rotate(18 252 478)" fill="#888">Left</text><text x="272" y="455" transform="rotate(-8 272 455)" fill="#777">Top</text></g>
          </svg>

          <div class="floatbar">
            <template v-for="(b, n) in viewTools" :key="n">
              <i v-if="b === '|'" class="vsep"></i>
              <button v-else-if="b === 'v'" class="more" aria-label="More"><i class="tri"></i></button>
              <button v-else :aria-label="b"><svg viewBox="0 0 20 20" v-html="icons[b]"></svg></button>
            </template>
          </div>

          <div class="timeline"><input v-model="time" type="range" min="0" max="7.61" step="0.01" aria-label="Simulation time" /></div>
          <div class="player">
            <button class="who"><svg viewBox="0 0 20 20" v-html="icons.card"></svg>Test_Robot<svg class="cv" viewBox="0 0 20 20" v-html="icons.chevd"></svg></button>
            <button aria-label="Pause"><svg viewBox="0 0 20 20" v-html="icons.bars"></svg></button>
            <output>5.89</output>
          </div>
        </section>

        <section class="editor">
          <header class="ehead">
            <h2>Path Editor - HP0020D_A00*</h2>
            <button v-for="b in ['caret', 'pin', 'close']" :key="b" :aria-label="b"><svg viewBox="0 0 20 20" v-html="icons[b]"></svg></button>
            <svg class="pointer" viewBox="0 0 22 22"><circle cx="11" cy="11" r="10" fill="#b3d443" opacity=".8" /><path d="M12 10v10l2-2 2 4 2-1-2-4h3z" fill="#fff" stroke="#555" stroke-width=".8" /></svg>
          </header>
          <div class="etools">
            <template v-for="(b, n) in pathTools" :key="n">
              <i v-if="b === '|'" class="esep"></i>
              <button v-else :class="b" :aria-label="b"><svg viewBox="0 0 20 20" v-html="icons[b]"></svg></button>
            </template>
            <output>5.90</output>
            <i class="esep"></i>
            <button class="sign" aria-label="Slower">−</button>
            <input v-model="speed" class="speed" type="range" aria-label="Simulation speed" />
            <button class="sign" aria-label="Faster">+</button>
            <i class="esep"></i>
            <input class="stepbox" type="text" value="0.01" aria-label="Time interval" />
            <span class="spin"><svg viewBox="0 0 6 12"><path d="M1 4l2-2 2 2M1 8l2 2 2-2" fill="none" stroke="#888" /></svg></span>
          </div>
          <div class="egrid">
            <table>
              <colgroup><col v-for="(c, n) in columns" :key="n" :class="'c' + n" /><col /></colgroup>
              <thead><tr><th v-for="(c, n) in columns" :key="n" :class="{ left: n === 0 || n === 10 || n === 13 }">{{ c }}</th><th></th></tr></thead>
              <tbody>
                <tr v-for="(r, i) in rows" :key="i" :class="{ bold: i === 5 }">
                  <td v-for="(v, c) in r" :key="c" :class="[cellKind(c), { grey: isGrey(i, c), child: c === 0 && i > 0 }]">
                    <div v-if="c === 0" class="namecell">
                      <button v-if="i === 0" class="exp" aria-label="Collapse"></button>
                      <svg viewBox="0 0 20 20" v-html="icons[i ? 'via' : 'robop']"></svg>{{ v }}
                    </div>
                    <template v-else>{{ v }}</template>
                  </td>
                  <td class="filler"></td>
                </tr>
              </tbody>
            </table>
          </div>
          <div class="etabs">
            <button>Sequence Editor</button><button class="active">Path Editor - HP0020D_A00*</button><button>Collision Viewer</button>
          </div>
        </section>
      </div>
    </main>

    <footer class="status">
      <span class="msg">[HP0020D_A00*][MOP] Move to loc via4 (Test_Robot)</span>
      <span class="snap">Snap Pick Intent</span>
      <span class="level">Component Pick Level</span>
      <span class="coords"><svg viewBox="0 0 20 20" v-html="icons.move"></svg>895.65, 1878.83, 0</span>
      <span class="mode">Standard Mode</span>
    </footer>
  </div>
</template>

<style>
html, body { background: #f0f0f0; }
</style>

<style scoped>
* { box-sizing: border-box; }
.app { display: flex; flex-direction: column; height: 100vh; min-height: 640px; border-top: 1px solid #111; border-left: 2px solid #151515; border-right: 2px solid #d4d4d4; background: #f0f0f0; color: #2b2b2b; font: 8px/10px "Lato", "Open Sans", sans-serif; overflow: hidden; }
button { display: flex; align-items: center; justify-content: center; padding: 0; border: 0; background: none; color: inherit; font: inherit; white-space: nowrap; }
h1, h2 { margin: 0; font: inherit; font-weight: 400; }
svg { display: block; flex: none; }
.tri { display: inline-block; width: 0; height: 0; border: 2px solid transparent; border-top-color: #222; border-bottom: 0; vertical-align: middle; }

.titlebar { flex: none; display: grid; grid-template-columns: 1fr auto 1fr; align-items: center; height: 19px; background: #fff; }
.titlebar h1 { padding-top: 2px; padding-left: 22px; }
.quick { display: flex; align-items: center; padding-top: 2px; padding-left: 3px; gap: 1px; }
.quick svg { width: 11px; height: 11px; }
.qb { width: 14px; height: 14px; }
.qb.first { margin-left: 7px; }
.qb.undo { margin-left: 2px; }
.qb.narrow { width: 8px; }
.qb.narrow svg { width: 8px; height: 8px; }
.qsep { width: 1px; height: 10px; background: #aaa; }
.winctl { display: flex; align-items: center; justify-content: flex-end; padding-top: 2px; }
.winctl button { width: 24px; height: 14px; }
.winctl button svg { width: 8px; height: 8px; }
.brand { margin-right: 26px; color: #16877f; font: 700 11px/12px "Open Sans", sans-serif; }

.tabs { flex: none; display: grid; grid-template-columns: 38px 43px 31px 58px 36px 55px 47px 43px 45px 1fr; height: 16px; margin-left: 2px; background: #539fb5; color: #fff; }
.tabs > .file { background: #00648a; }
.tabs > .active { background: #fff; color: #33809a; }
.tabsright { display: flex; align-items: center; justify-content: flex-end; padding-right: 2px; }
.tabsright button { width: 12px; height: 12px; }
.tabsright button svg { width: 7px; height: 7px; }
.search { display: flex; align-items: center; width: 100px; height: 11px; margin-right: 3px; padding-right: 2px; background: #fff; }
.search input { flex: 1; min-width: 0; padding: 0 3px; border: 0; outline: 0; background: none; color: #555; font: inherit; }
.search input::placeholder { color: #666; opacity: 1; }
.search svg { width: 9px; height: 9px; }

.ribbon { flex: none; display: flex; height: 61px; padding-left: 2px; background: #fff; border-bottom: 1px solid #b9bbbd; }
.group { display: flex; flex-direction: column; margin: 2px 0 1px; border-right: 1px solid #c4c6c8; }
.items { display: grid; flex: 1; align-items: start; padding-top: 3px; }
.create { width: 112px; } .create .items { grid-template-columns: 50px 38px 1fr; }
.location { width: 307px; padding-left: 3px; } .location .items { grid-template-columns: 49px 49px 45px 48px 59px 53px; }
.path { width: 182px; padding-left: 1px; } .path .items { grid-template-columns: 48px 51px 52px 26px; }
.volumes { width: 81px; padding-left: 2px; } .volumes .items { grid-template-columns: 31px 43px; }
.templates { width: 98px; padding-left: 2px; } .templates .items { grid-template-columns: 42px 49px; }
.events { width: 63px; padding-left: 3px; } .events .items { grid-template-columns: 26px 30px; }
.docs { width: 116px; padding-left: 3px; } .docs .items { grid-template-columns: 45px 34px 30px; }
.big { flex-direction: column; color: #a2a4a6; line-height: 9px; }
.big span { display: block; }
.big svg { width: 20px; height: 20px; margin-bottom: 3px; }
.big.on { color: #2b2b2b; }
.big .tri { margin-left: 2px; }
.smalls { display: grid; gap: 2px; justify-items: center; }
.smalls button { height: 12px; }
.smalls svg { width: 11px; height: 11px; }
.smalls.wide { grid-template-columns: 16px 17px 24px; margin-left: -3px; }
.smalls.wide { gap: 3px 0; }
.smalls.wide .tri { margin-left: 4px; }
.glabel { text-align: center; color: #3a7f95; height: 11px; }

.work { flex: 1; display: flex; min-height: 0; padding-top: 1px; }
.monitor { flex: none; display: flex; align-items: flex-start; gap: 2px; width: 22px; padding: 3px 0 0 1px; }
.monitor i { width: 4px; height: 72px; background: #b3b4b6; }
.monitor button { writing-mode: vertical-rl; line-height: 12px; margin-top: 2px; }
.side { flex: none; display: flex; flex-direction: column; width: 196px; margin-right: 2px; gap: 6px; }
.panel { display: flex; flex-direction: column; }
.operations { flex: 1; min-height: 0; }
.phead { flex: none; display: flex; align-items: center; height: 13px; padding: 0 1px 0 3px; background: #d8d9da; }
.phead h2, .ehead h2 { flex: 1; }
.phead button { width: 13px; color: #555; }
.phead svg, .ehead button svg { width: 7px; height: 7px; }
.ptools { flex: none; display: flex; align-items: center; height: 17px; padding-left: 1px; gap: 3px; }
.ptools svg { width: 12px; height: 12px; }
.ptools .dropB svg { width: 6px; height: 6px; }
.ptree { flex: 1; min-height: 0; background: #fff; overflow: hidden; }
.ptree ul { display: grid; grid-auto-rows: 1fr; margin: 0; padding: 0; list-style: none; }
.objects ul { height: 256px; }
.operations ul { height: 128px; }
.ptree li { display: flex; min-height: 0; font: 7px/10px "Liberation Sans", Arial, sans-serif; }
.guide { position: relative; flex: none; display: flex; align-items: center; width: 13px; }
.guide.line::before, .guide.tee::before, .guide.corner::before { content: ""; position: absolute; left: 6px; top: 0; bottom: 0; border-left: 1px solid #dcdcdc; }
.guide.corner::before { bottom: 50%; }
.guide.tee::after, .guide.corner::after, .guide.root::after { content: ""; position: absolute; left: 7px; right: 0; top: 50%; border-top: 1px solid #dcdcdc; }
.exp { position: relative; z-index: 1; width: 6px; height: 7px; margin-left: 3px; border: 1px solid #b5b5b5; background: #fff linear-gradient(#333, #333) center / 4px 1px no-repeat; }
.guide .exp { width: 7px; background-size: 3px 1px; }
.exp.plus { background-image: linear-gradient(#333, #333), linear-gradient(#333, #333); background-size: 3px 1px, 1px 3px; background-position: center; background-repeat: no-repeat; }
.guide .exp.plus { background-size: 3px 1px, 1px 3px; }
.ptree label { display: flex; align-items: center; white-space: nowrap; }
.ptree label svg { width: 11px; height: 10px; margin: 0 3px; }
.ptree input { appearance: none; flex: none; width: 6px; height: 6px; margin: 0 0 0 3px; border: 1px solid #3b3ba6; background: #fff; }
.ptree input.full { background: #5357dc; }
.ptree input.part { background: linear-gradient(135deg, #2b2fd0 60%, #fff 60%); }
.ptree input.cross { background: radial-gradient(#2b2fd0 1px, #d4dcfb 2px); }
.bold { font-weight: 700; color: #000; }
.ptabs, .etabs { flex: none; display: flex; height: 13px; }
.ptabs button { padding: 0 4px; }
.ptabs .active, .etabs .active { background: #c9e3e8; }

.center { flex: 1; display: flex; flex-direction: column; min-width: 0; }
.viewport { position: relative; flex: 1; min-height: 0; background: linear-gradient(#b0b3b5, #d5d7d8 55%, #e5e7e8); border-bottom: 1px solid #f4f4f4; overflow: hidden; }
.scene { width: 100%; height: 100%; }
.axes { font: 700 9px "Open Sans", sans-serif; }
.face { font: 700 6px "Open Sans", sans-serif; fill: #333; }
.floatbar { position: absolute; top: 7px; left: 345px; display: flex; align-items: center; height: 25px; padding: 0 3px 0 2px; border: 1px solid #d4dcde; border-radius: 3px; background: #e7e9ea; box-shadow: 0 1px 1px #9a9da0; }
.floatbar button { width: 21px; height: 20px; }
.floatbar svg { width: 15px; height: 15px; }
.floatbar .more { width: 7px; }
.vsep { width: 1px; height: 14px; margin: 0 1px; background: #bfc2c4; }
.timeline { position: absolute; left: 108px; right: 108px; bottom: 25px; display: flex; align-items: center; height: 16px; padding: 0 5px; border-radius: 8px; background: rgba(255, 255, 255, .5); }
.timeline input { appearance: none; flex: 1; height: 6px; margin: 0; border: 1px solid #4c98a9; border-radius: 3px; background: #cdebf0; }
.timeline input::-webkit-slider-thumb { appearance: none; width: 14px; height: 6px; background: #3f8fa3; }
.player { position: absolute; left: 50%; bottom: 8px; display: flex; align-items: center; width: 141px; height: 17px; margin-left: -70px; padding: 0 6px; border-radius: 4px; background: rgba(255, 255, 255, .85); color: #35818f; }
.player svg { width: 11px; height: 11px; }
.player .who { gap: 2px; margin-right: 14px; }
.player .cv { width: 7px; height: 7px; margin-left: 1px; }
.player output { margin-left: auto; }

.editor { flex: none; display: flex; flex-direction: column; height: 176px; margin-top: 1px; }
.ehead { position: relative; flex: none; display: flex; align-items: center; height: 14px; padding: 0 1px 0 3px; background: #539fb5; color: #fff; }
.ehead h2, .etabs .active, .msg, .coords { font: 7px/10px "Open Sans", sans-serif; }
.ehead button { width: 13px; }
.ehead .pointer { position: absolute; left: 209px; top: -2px; z-index: 2; width: 22px; height: 22px; }
.etools { flex: none; display: flex; align-items: center; height: 17px; padding-left: 1px; }
.etools button { width: 15px; height: 14px; }
.etools .drop { width: 12px; }
.etools .pause { width: 18px; }
.etools svg { width: 11px; height: 11px; }
.esep { width: 1px; height: 12px; margin: 0 2px 0 1px; background: #c4c6c8; }
.etools output { width: 53px; text-align: right; font: 700 9px/12px "Liberation Sans", Arial, sans-serif; color: #111; }
.etools .sign { color: #111; font: 700 10px/12px "Liberation Sans", Arial, sans-serif; }
.speed { appearance: none; width: 116px; height: 12px; margin: 0 2px; background: linear-gradient(#b4b6b8, #b4b6b8) center / 100% 1px no-repeat; }
.speed::-webkit-slider-thumb { appearance: none; width: 4px; height: 9px; border: 1px solid #999; background: #eee; }
.stepbox { width: 24px; padding: 0; border: 0; background: none; color: #444; font: 9px/12px "Liberation Sans", Arial, sans-serif; }
.etools .spin svg { width: 5px; height: 10px; }
.egrid { flex: 1; min-height: 0; background: #fff; overflow: hidden; font: 7px/9px "Liberation Sans", Arial, sans-serif; }
table { width: 100%; height: 76px; table-layout: fixed; border-collapse: collapse; }
.c0 { width: 98px; } .c1, .c6, .c9, .c12 { width: 46px; }
.c2, .c3, .c4, .c5, .c7, .c8, .c11, .c13 { width: 47px; }
.c10 { width: 93px; } .c14, .c15 { width: 51px; }
th { height: 12px; padding: 0; border: 1px solid #bfc0c2; background: #f0f0f0; font-weight: 400; white-space: nowrap; }
th.left { text-align: left; padding-left: 3px; }
th:first-child { border-left: 0; }
td { padding: 0; border: 1px solid #c6c7c9; text-align: center; white-space: nowrap; }
td:first-child { border-left: 0; }
td.num { text-align: right; padding-right: 10px; }
td.filler { border: 0; }
td.grey { background: #dcdcdc; }
td.name { text-align: left; }
.namecell { display: flex; align-items: center; height: 9px; }
.namecell svg { width: 10px; height: 10px; margin: 0 4px 0 5px; }
.child .namecell { padding-left: 23px; }
.etabs { height: 14px; padding-left: 1px; }
.etabs button { padding: 0 4px; margin-right: 1px; }
.etabs .active { padding: 0 3px; }

.status { flex: none; display: flex; align-items: center; height: 19px; padding: 0 21px 2px 7px; }
.msg { flex: 1; }
.snap { margin-right: 12px; }
.level { margin-right: 13px; }
.coords { display: flex; align-items: center; gap: 3px; margin-right: 37px; }
.coords svg { width: 10px; height: 10px; }
</style>
